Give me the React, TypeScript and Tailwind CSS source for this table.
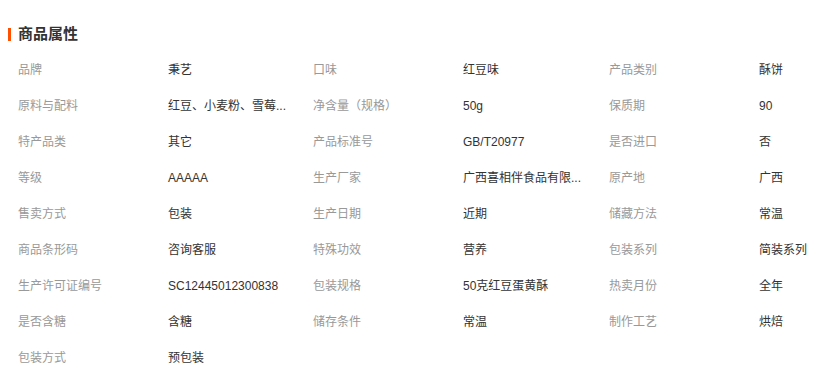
import React from "react";

const rows: [string, string, string, string, string, string][] = [
  ["品牌", "秉艺", "口味", "红豆味", "产品类别", "酥饼"],
  ["原料与配料", "红豆、小麦粉、雪莓...", "净含量（规格）", "50g", "保质期", "90"],
  ["特产品类", "其它", "产品标准号", "GB/T20977", "是否进口", "否"],
  ["等级", "AAAAA", "生产厂家", "广西喜相伴食品有限...", "原产地", "广西"],
  ["售卖方式", "包装", "生产日期", "近期", "储藏方法", "常温"],
  ["商品条形码", "咨询客服", "特殊功效", "营养", "包装系列", "简装系列"],
  ["生产许可证编号", "SC12445012300838", "包装规格", "50克红豆蛋黄酥", "热卖月份", "全年"],
  ["是否含糖", "含糖", "储存条件", "常温", "制作工艺", "烘焙"],
];

function Label({ children }: { children: React.ReactNode }) {
  return <div className="text-[#999999] whitespace-nowrap">{children}</div>;
}
function Value({ children }: { children: React.ReactNode }) {
  return <div className="text-[#333333] whitespace-nowrap">{children}</div>;
}

export default function App() {
  return (
    <div
      className="w-[834px] h-[380px] bg-white overflow-hidden"
      style={{ fontFamily: '"Liberation Sans", "Noto Sans CJK SC", sans-serif' }}
    >
      <div className="mt-[26px] ml-[8px] h-[16px] flex items-center">
        <span className="w-[3px] h-[13px] bg-[#ff5000]" />
        <span className="ml-[7px] text-[15px] leading-[16px] font-bold text-[#333333]">商品属性</span>
      </div>
      <div className="mt-[10px] ml-[18px] grid grid-cols-[150px_145px_150px_146px_150px_1fr] text-[12px] leading-[14px]">
        {rows.map((r, i) => (
          <React.Fragment key={i}>
            <div className="h-[36px] flex items-center"><Label>{r[0]}</Label></div>
            <div className="h-[36px] flex items-center"><Value>{r[1]}</Value></div>
            <div className="h-[36px] flex items-center"><Label>{r[2]}</Label></div>
            <div className="h-[36px] flex items-center"><Value>{r[3]}</Value></div>
            <div className="h-[36px] flex items-center"><Label>{r[4]}</Label></div>
            <div className="h-[36px] flex items-center"><Value>{r[5]}</Value></div>
          </React.Fragment>
        ))}
        <div className="h-[36px] flex items-center"><Label>包装方式</Label></div>
        <div className="h-[36px] flex items-center"><Value>预包装</Value></div>
      </div>
    </div>
  );
}
